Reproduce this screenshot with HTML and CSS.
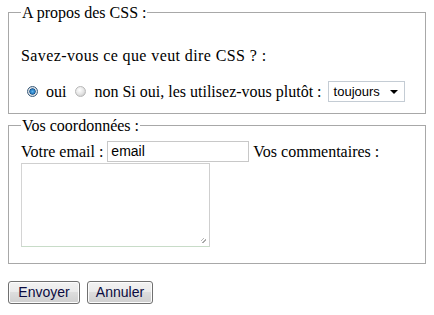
FILE: index.html
```html
<!DOCTYPE html>
<html lang="fr">
<head>
<meta charset="utf-8">
<title>Formulaire</title>
<link rel="stylesheet" href="styles.css">
</head>
<body>
<form class="form">
  <fieldset class="box box-css">
    <legend class="legend">A propos des CSS :</legend>
    <p class="question">Savez-vous ce que veut dire CSS ? :</p>
    <div class="answers">
      <span class="radio checked"></span><span class="word">oui</span>
      <span class="radio"></span><span class="word">non Si oui, les utilisez-vous plutôt :</span>
      <span class="select">toujours<span class="arrow"></span></span>
    </div>
  </fieldset>
  <fieldset class="box box-contact">
    <legend class="legend">Vos coordonnées :</legend>
    <div class="contact-line">
      <span>Votre email :</span>
      <span class="input">email</span>
      <span>Vos commentaires :</span>
    </div>
    <div class="textarea"><span class="grip"></span></div>
  </fieldset>
  <div class="actions">
    <span class="btn btn-send">Envoyer</span>
    <span class="btn btn-cancel">Annuler</span>
  </div>
</form>
</body>
</html>
```

FILE: styles.css
```css
html, body {
  margin: 0;
  padding: 0;
  background: #ffffff;
}
body {
  padding: 3px 8px 0 8px;
  font-family: "Liberation Serif", "Times New Roman", serif;
  font-size: 16px;
  color: #000;
}
.form {
  width: 418px;
}
.box {
  margin: 0;
  border: 1px solid #a8a8a8;
  padding: 0 12px 11px 12px;
  min-width: 0;
}
.legend {
  padding: 0 1px;
  margin-left: 0;
  line-height: 19px;
  height: 19px;
}
.question {
  margin: 0;
  padding-top: 24px;
  line-height: 19px;
  letter-spacing: 0.4px;
}
.answers {
  display: flex;
  align-items: center;
  margin-top: 15px;
  height: 22px;
  line-height: 19px;
}
.radio {
  width: 11px;
  height: 11px;
  border-radius: 50%;
  border: 1px solid #b8b8b8;
  background: radial-gradient(circle at 40% 35%, #ffffff 0%, #e6e6e6 50%, #bdbdbd 100%);
  box-sizing: border-box;
  margin-left: 6px;
  margin-right: 8px;
  flex: none;
}
.radio.checked {
  border-color: #3b5c7a;
  background: radial-gradient(circle at 50% 50%, #5fb6f0 0%, #1f73b8 38%, #1a4f80 45%, #e0e6ec 55%, #b8c2cc 100%);
}
.word {
  margin-right: 4px;
  white-space: nowrap;
}
.word + .radio {
  margin-left: 5px;
}
.select {
  position: relative;
  display: inline-block;
  box-sizing: border-box;
  width: 77px;
  height: 21px;
  margin-left: 2px;
  border: 1px solid #c4ccd4;
  padding: 1px 0 0 5px;
  font-family: "Liberation Sans", Arial, sans-serif;
  font-size: 13px;
  line-height: 17px;
  color: #000;
  background: #fff;
  flex: none;
}
.arrow {
  position: absolute;
  right: 6px;
  top: 8px;
  width: 0;
  height: 0;
  border-left: 4px solid transparent;
  border-right: 4px solid transparent;
  border-top: 4px solid #000;
}
.box-contact {
  margin-top: 2px;
  padding-bottom: 16px;
}
.contact-line {
  display: flex;
  align-items: center;
  gap: 4px;
  height: 22px;
  margin-top: 5px;
  line-height: 19px;
  white-space: nowrap;
}
.input {
  display: inline-block;
  box-sizing: border-box;
  width: 142px;
  height: 21px;
  border: 1px solid #c8c8c8;
  padding: 1px 0 0 3px;
  font-family: "Liberation Sans", Arial, sans-serif;
  font-size: 14px;
  line-height: 17px;
  color: #000;
  flex: none;
}
.textarea {
  position: relative;
  box-sizing: border-box;
  width: 189px;
  height: 84px;
  margin-top: 1px;
  border: 1px solid #cfcfcf;
  border-bottom-color: #c8dcc8;
  border-left-color: #d4d4d4;
}
.grip {
  position: absolute;
  right: 3px;
  bottom: 3px;
  width: 5px;
  height: 5px;
  background:
    linear-gradient(135deg, transparent 55%, #a8a8a8 55%, #a8a8a8 70%, transparent 70%),
    linear-gradient(135deg, transparent 20%, #b8b8b8 20%, #b8b8b8 35%, transparent 35%);
}
.actions {
  display: flex;
  gap: 7px;
  margin-top: 17px;
}
.btn {
  display: inline-block;
  box-sizing: border-box;
  height: 23px;
  border: 1px solid #707070;
  border-radius: 3px;
  padding: 0;
  font-family: "Liberation Sans", Arial, sans-serif;
  font-size: 14px;
  line-height: 21px;
  color: #0a0a40;
  background: linear-gradient(to bottom, #f2f2f2 0%, #ebebeb 45%, #dddddd 50%, #cfcfcf 100%);
  box-shadow: inset 0 0 0 1px #fcfcfc;
  text-align: center;
}
.btn-send {
  width: 72px;
}
.btn-cancel {
  width: 66px;
}
```
